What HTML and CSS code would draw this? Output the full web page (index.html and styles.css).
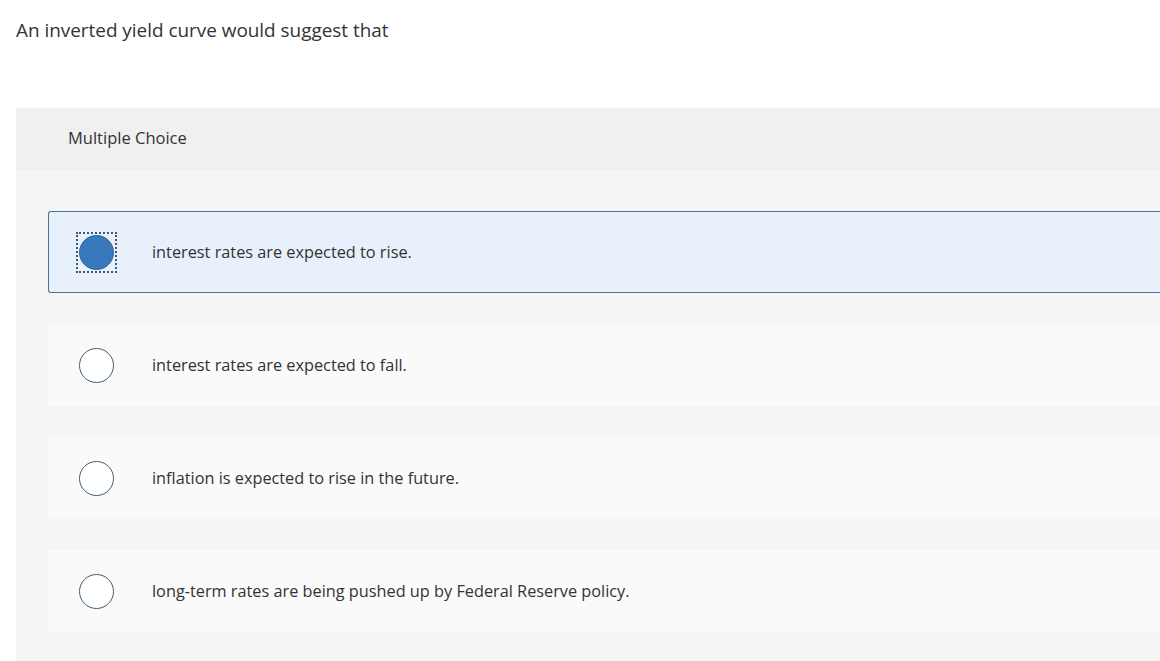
FILE: index.html
```html
<!DOCTYPE html>
<html>
<head>
<meta charset="utf-8">
<link rel="stylesheet" href="styles.css">
</head>
<body>
<div class="page">
  <p class="question">An inverted yield curve would suggest that</p>
  <div class="panel">
    <div class="panel-head">Multiple Choice</div>
    <div class="panel-body">
      <div class="option selected">
        <span class="radio-wrap focus"><span class="radio checked"></span></span>
        <span class="label">interest rates are expected to rise.</span>
      </div>
      <div class="option">
        <span class="radio-wrap"><span class="radio"></span></span>
        <span class="label">interest rates are expected to fall.</span>
      </div>
      <div class="option">
        <span class="radio-wrap"><span class="radio"></span></span>
        <span class="label">inflation is expected to rise in the future.</span>
      </div>
      <div class="option">
        <span class="radio-wrap"><span class="radio"></span></span>
        <span class="label">long-term rates are being pushed up by Federal Reserve policy.</span>
      </div>
    </div>
  </div>
</div>
</body>
</html>
```

FILE: styles.css
```css
html, body {
  margin: 0;
  padding: 0;
  background: #ffffff;
  overflow: hidden;
}
body {
  font-family: "Open Sans", "Lato", sans-serif;
  color: #333333;
}
.page {
  padding: 0 0 0 16px;
  width: 1200px;
}
.question {
  margin: 0;
  padding-top: 17px;
  height: 108px;
  box-sizing: border-box;
  font-size: 18.9px;
  line-height: 26px;
  color: #333;
}
.panel {
  background: #f5f5f5;
  height: 560px;
}
.panel-head {
  background: #f0f0f0;
  height: 62px;
  box-sizing: border-box;
  padding: 19px 0 0 52px;
  font-size: 16.5px;
  line-height: 22px;
  color: #333;
}
.panel-body {
  padding: 41px 0 0 32px;
  display: flex;
  flex-direction: column;
  gap: 31px;
}
.option {
  height: 82px;
  box-sizing: border-box;
  background: #fafafa;
  display: flex;
  align-items: center;
  padding-left: 27px;
  border: 1px solid transparent;
  border-right: none;
  border-radius: 3px 0 0 3px;
}
.option.selected {
  background: #e8f1fb;
  border-color: #4d7391;
}
.radio-wrap {
  width: 41px;
  height: 41px;
  box-sizing: border-box;
  display: flex;
  align-items: center;
  justify-content: center;
  flex: none;
}
.radio-wrap.focus {
  outline: 2px dotted #3d5a75;
  outline-offset: -2px;
}
.radio {
  width: 35px;
  height: 35px;
  box-sizing: border-box;
  border-radius: 50%;
  border: 1.5px solid #3f5e7b;
  background: #ffffff;
}
.radio.checked {
  background: #3a78bd;
  border-color: #2f65a0;
}
.label {
  margin-left: 35px;
  font-size: 16.3px;
  color: #333;
}
```
